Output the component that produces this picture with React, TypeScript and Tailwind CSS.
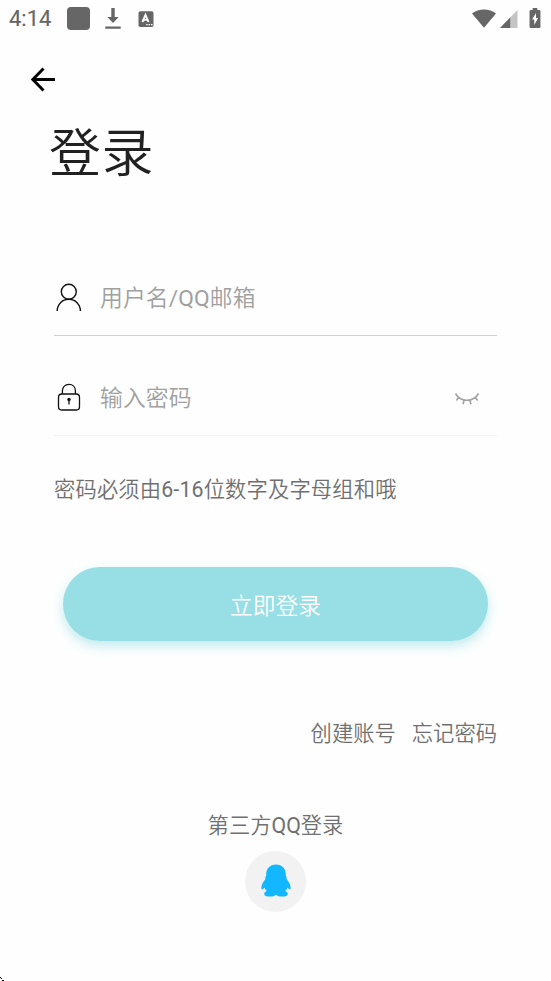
import { useState } from 'react';
import type { ReactNode } from 'react';

function StatusBar() {
  return (
    <div className="flex h-[38px] items-center pl-[9px] text-[#666666]">
      <span className="w-[58px] text-[22px] leading-[38px] font-normal [-webkit-text-stroke:0.15px_#666666]">4:14</span>
      <div className="mb-px h-[23px] w-[23px] rounded-[4px] bg-[#666666]" />
      {/* Download */}
      <svg className="ml-[15px]" width="16" height="22" viewBox="0 0 16 22" fill="currentColor">
        <path d="M6.300 0h3.400v9h4L8 15 2.300 9h4zM.3 18.500h15.400v2.200H.3z" />
      </svg>
      {/* Keyboard language */}
      <svg className="mb-px ml-[17px]" width="16" height="16" viewBox="0 0 16 16">
        <rect x=".5" y=".3" width="15" height="15.7" rx="1.8" fill="#666666" />
        <path d="M4.4 11 7.5 4l3 7M5.6 8.9h3.9" fill="none" stroke="#fff" strokeWidth="1.9" />
        <path d="M8.2 13h1.5v1.3H8.2zm2.4 0h1.5v1.3h-1.5zm2.4 0h1.5v1.3H13z" fill="#fff" />
      </svg>
      {/* Wifi, signal, battery */}
      <svg className="mb-[2px] ml-auto" width="24" height="19" viewBox="0 0 24 19" fill="currentColor">
        <path d="M0 4.500C6.600-.8 17.400-.8 24 4.500L12 18.700z" />
      </svg>
      <svg className="ml-[4px]" width="18" height="18" viewBox="0 0 18 18" fill="currentColor">
        <path d="M17.500 0v18H0z" fill="#c4c4c4" />
        <path d="M10.200 7.500V18H0z" />
      </svg>
      <svg className="mr-[10px] mb-[2px] ml-[11px]" width="12" height="20" viewBox="0 0 13 20" preserveAspectRatio="none">
        <path d="M4 0h5v2h2a1.4 1.4 0 0 1 1.4 1.4v15A1.4 1.4 0 0 1 11 20H2a1.4 1.4 0 0 1-1.4-1.6v-15A1.4 1.4 0 0 1 2 2h2z" fill="#666666" />
        <path d="M7.6 5 3.3 11.600h2.400V17l4.100-7H7.600z" fill="#fff" />
      </svg>
    </div>
  );
}

function UserIcon() {
  return (
    <svg width="30" height="30" viewBox="0 0 30 30" fill="none" stroke="#111" strokeWidth="1.4">
      <circle cx="14.800" cy="8.800" r="7.500" />
      <path d="M3.200 28c0-6.600 5-11.700 11.600-11.700S26.400 21.400 26.400 28" />
    </svg>
  );
}

function LockIcon() {
  return (
    <svg width="30" height="30" viewBox="0 0 30 30" fill="none" stroke="#111" strokeWidth="1.3">
      <rect x="4.500" y="11" width="21" height="16" rx="3.200" />
      <path d="M8.400 11V7.800C8.400 4 11.200 1.300 15 1.300s6.400 2.700 6.400 6.500V11" />
      <circle cx="15" cy="16.500" r="1.700" fill="#111" stroke="none" />
      <path d="M15 16.500v5" />
    </svg>
  );
}

function ClosedEyeIcon() {
  return (
    <svg width="26" height="14" viewBox="0 0 26 14" fill="none" stroke="#a3a3a3" strokeWidth="1.6">
      <path d="M1.500 1.500C6.500 10.500 19.500 10.500 24.500 1.500M4.800 5.300 2.300 8.500M10.200 8 9 12.300M15.800 8 17 12.300M21.200 5.300l2.500 3.200" />
    </svg>
  );
}

function PenguinIcon() {
  return (
    <svg width="30" height="34" viewBox="0 0 30 34" fill="#12b7ff">
      <path d="M15 .5C8.700.5 5.200 5 5.200 10.300v1.800c-.7.800-1.200 1.700-.8 3C2.200 18 .2 21.500.3 24.100c.1 1.300.9 1.500 1.800.8.700-.5 1-1 1.400-1.500.4 1.500 1.200 2.600 2.300 3.700-1.600.7-2.600 1.600-2.600 2.900 0 1.800 2.400 2.600 5.500 2.600 2.800 0 5-.7 6.300-1.900 1.300 1.200 3.500 1.900 6.300 1.900 3.100 0 5.500-.8 5.500-2.600 0-1.300-1-2.200-2.600-2.900 1.100-1.100 1.900-2.200 2.300-3.700.4.500.7 1 1.400 1.500.9.700 1.700.5 1.800-.8.100-2.600-1.900-6.100-4.100-9 .4-1.300-.1-2.200-.8-3v-1.800C24.800 5 21.300.5 15 .5Z" />
    </svg>
  );
}

interface FieldProps {
  icon: ReactNode;
  placeholder: string;
  type: string;
  border: string;
  children?: ReactNode;
}

function Field({ icon, placeholder, type, border, children }: FieldProps) {
  return (
    <div className={`flex h-[76px] items-center border-b ${border}`}>
      {icon}
      <input
        type={type}
        placeholder={placeholder}
        className="mt-[2px] ml-[16px] h-[40px] min-w-0 flex-1 bg-transparent text-[22.800px] tracking-[0.1px] text-[#444] outline-none placeholder:text-[#a0a0a0]"
      />
      {children}
    </div>
  );
}

export default function App() {
  const [visible, setVisible] = useState(false);

  return (
    <div className="flex h-[981px] w-[551px] flex-col overflow-hidden bg-[#fefefe] font-['Roboto','Noto_Sans_CJK_SC_DemiLight','Noto_Sans_CJK_SC',sans-serif]">
      <StatusBar />

      <button className="mt-[28px] ml-[29px] h-[26px] w-[27px]" aria-label="返回">
        <svg width="27" height="26" viewBox="0 0 27 26" fill="none" stroke="#000" strokeWidth="2.900">
          <path d="M26 13.500H4.300M14.500 2.500 3.800 13.500l10.700 11" />
        </svg>
      </button>

      <h1 className="mt-[23px] ml-[49px] text-[52px] leading-[80px] tracking-[0.5px] text-[#212121]">登录</h1>

      <form className="mt-[65px] mr-[54px] ml-[54px] flex flex-col" onSubmit={(e) => e.preventDefault()}>
        <Field icon={<UserIcon />} placeholder="用户名/QQ邮箱" type="text" border="border-[#d3d3d3]" />
        <div className="h-[24px]" />
        <Field icon={<LockIcon />} placeholder="输入密码" type={visible ? 'text' : 'password'} border="border-[#f4f4f4]">
          <button type="button" className="mt-[3px] mr-[17px]" aria-label="显示密码" onClick={() => setVisible(!visible)}>
            <ClosedEyeIcon />
          </button>
        </Field>

        <p className="mt-[39px] text-[21.300px] leading-[30px] tracking-[0.15px] whitespace-nowrap text-[#707070]">
          密码必须由6-16位数字及字母组和哦
        </p>

        <button
          type="submit"
          className="mx-[9px] mt-[62px] h-[74px] rounded-full bg-[#98dee5] pt-[6px] text-[22.800px] text-white shadow-[0_5px_12px_#98dee599]"
        >
          立即登录
        </button>
      </form>

      <div className="mt-[78px] mr-[54px] flex justify-end gap-[16px] text-[21.300px] leading-[30px] text-[#707070]">
        <a href="#">创建账号</a>
        <a href="#">忘记密码</a>
      </div>

      <div className="mt-[62px] flex flex-col items-center text-[21.300px] leading-[30px] text-[#707070]">
        <span>第三方QQ登录</span>
        <button className="mt-[10px] flex h-[61px] w-[61px] items-center justify-center rounded-full bg-[#f2f2f2] pb-[2px]" aria-label="QQ">
          <PenguinIcon />
        </button>
      </div>

      {/* Pointer tip in the corner */}
      <svg className="mt-auto" width="5" height="5" viewBox="0 0 5 5" fill="#000">
        <path d="M0 1h1v1H0zM1 2h1v1H1zM2 4h2v1H2z" />
      </svg>
    </div>
  );
}
